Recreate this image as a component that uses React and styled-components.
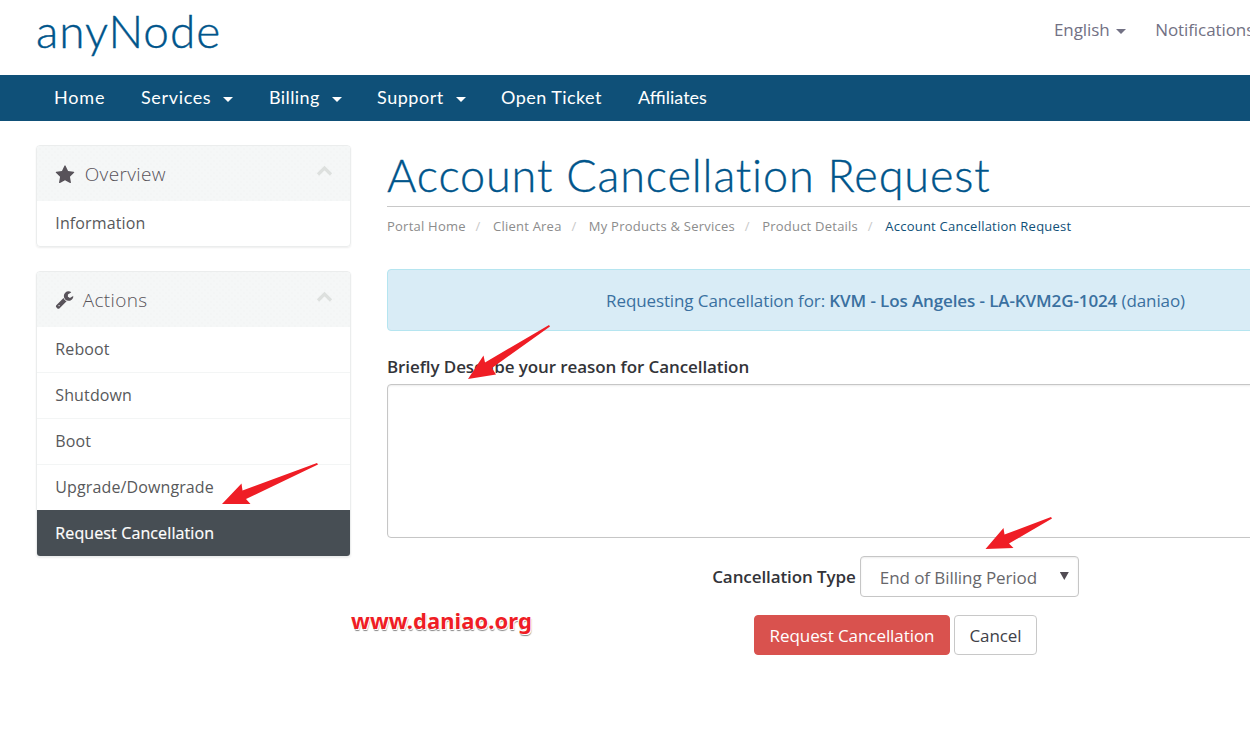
import React from "react";
import styled, { createGlobalStyle, css } from "styled-components";

const GlobalStyle = createGlobalStyle`
  * { box-sizing: border-box; }
  html, body { margin: 0; height: 100%; overflow: hidden; background: #fff; }
  body { font-family: "Open Sans", "Liberation Sans", sans-serif; font-size: 16px; color: #58595b; }
  ul, ol { list-style: none; margin: 0; padding: 0; }
  a { color: inherit; text-decoration: none; }
`;

const Page = styled.div`
  position: relative;
  width: 100%;
  height: 733px;
  overflow: hidden;
`;

const Header = styled.header`
  display: flex;
  justify-content: space-between;
  height: 75px;
  padding-left: 36px;
`;

const Logo = styled.a`
  font: 300 46px/62px Lato, sans-serif;
  letter-spacing: 0.95px;
  color: #00558b;
  -webkit-text-stroke: 0.4px #00558b;
`;

const TopLinks = styled.div`
  display: flex;
  width: 196px;
  gap: 29px;
  font-size: 17px;
  line-height: 60px;
  letter-spacing: -0.08px;
  white-space: nowrap;
  color: #727184;
`;

const Caret = styled.i`
  display: inline-block;
  vertical-align: middle;
  margin-left: ${(p) => p.$gap || 6.5}px;
  border: solid transparent;
  border-width: 5px 5px 0;
  border-top-color: currentColor;
`;

const NavBar = styled.nav`
  display: flex;
  height: 46px;
  padding-left: 54px;
  background: #0f5078;
  color: #fff;
  font: 400 18px/45px Lato, sans-serif;
`;

const NavItem = styled.a`
  width: ${(p) => p.$w}px;
  letter-spacing: ${(p) => p.$ls || 0}px;
  white-space: nowrap;
`;

const Content = styled.div`
  display: flex;
  gap: 36px;
  padding: 24px 0 0 36px;
`;

const Sidebar = styled.aside`
  display: flex;
  flex: none;
  flex-direction: column;
  gap: 24px;
  width: 315px;
`;

const Panel = styled.section`
  border: 1px solid #ebeded;
  border-radius: 4px;
  box-shadow: 0 1px 2px rgba(0, 0, 0, 0.07);
  overflow: hidden;
`;

const PanelHeading = styled.h3`
  display: flex;
  align-items: center;
  height: 55px;
  margin: 0;
  padding: 0 17px 0 18px;
  background-color: #f5f7f7;
  background-image: radial-gradient(#f0f2f2 0.5px, transparent 0.8px), radial-gradient(#f0f2f2 0.5px, transparent 0.8px);
  background-size: 6px 6px;
  background-position: 0 0, 3px 3px;
  font-size: 19px;
  font-weight: 300;
  color: #58535a;
`;

const HeadingText = styled.span`
  flex: 1;
  margin-left: ${(p) => p.$gap}px;
  letter-spacing: 0.35px;
`;

const PanelItem = styled.li`
  height: ${(p) => (p.$last ? 45 : 46)}px;
  padding-left: 18.300px;
  border-bottom: ${(p) => (p.$last ? 0 : 1)}px solid #f3f5f5;
  font-size: 16px;
  line-height: 44px;
  letter-spacing: 0.12px;
  color: #58595b;
  ${(p) => p.$active && css`
    height: 46px;
    line-height: 46px;
    color: #fff;
    background: #474e54;
    border: 0;
    -webkit-text-stroke: 0.2px #fff;
  `}
`;

const Main = styled.main`
  flex: none;
  width: 1017px;
`;

const Title = styled.h1`
  height: 62px;
  margin: 0;
  border-bottom: 1px solid #c8c8c8;
  font: 300 45px/60px Lato, sans-serif;
  letter-spacing: 0.86px;
  color: #00558b;
  -webkit-text-stroke: 0.35px #00558b;
`;

const Breadcrumb = styled.ol`
  display: flex;
  height: 38px;
  font-size: 13px;
  line-height: 38px;
  letter-spacing: 0.23px;
  color: #8c8c8c;
`;

const Crumb = styled.li`
  color: ${(p) => (p.$current ? "#0f5078" : "inherit")};
`;

const Slash = styled.li`
  padding: 0 12.450px 0 9.800px;
  color: #c9c9c9;
`;

const Alert = styled.div`
  height: 62px;
  margin-top: 24px;
  border: 1px solid #b5e5f0;
  border-radius: 4px;
  background: #d9ecf6;
  color: #3a70a0;
  font-size: 17px;
  line-height: 62px;
  letter-spacing: -0.11px;
  text-align: center;
  strong { font-weight: 600; }
`;

const Label = styled.label`
  font-size: 17px;
  font-weight: 600;
  line-height: 24px;
  letter-spacing: -0.09px;
  color: #333439;
`;

const ReasonField = styled.div`
  display: flex;
  flex-direction: column;
  margin-top: 24px;
`;

const Textarea = styled.textarea`
  height: 154px;
  margin-top: 5px;
  border: 1px solid #c6c6c6;
  border-radius: 4px;
  background: #fff;
  box-shadow: inset 0 1px 2px rgba(0, 0, 0, 0.08);
  resize: none;
`;

const FormRow = styled.div`
  display: flex;
  justify-content: center;
  align-items: center;
  gap: 4px;
  margin-top: 18px;
`;

const Select = styled.div`
  display: flex;
  justify-content: space-between;
  width: 219px;
  height: 41px;
  padding: 0 9px 0 19px;
  border: 1px solid #c6c6c6;
  border-radius: 4px;
  box-shadow: inset 0 1px 2px rgba(0, 0, 0, 0.08);
  font-size: 17px;
  line-height: 42px;
  letter-spacing: -0.08px;
  color: #67676b;
`;

const SelectArrow = styled.i`
  margin-top: 15px;
  width: 9px;
  height: 8px;
  background: #514c53;
  clip-path: polygon(0 0, 100% 0, 50% 100%);
`;

const Button = styled.button`
  width: ${(p) => p.$w}px;
  height: 40px;
  padding: 2px 0 0;
  border: 1px solid ${(p) => (p.$danger ? "#d9524e" : "#c8c8c8")};
  border-radius: 4px;
  background: ${(p) => (p.$danger ? "#d9524e" : "#fff")};
  color: ${(p) => (p.$danger ? "#fff" : "#404148")};
  font: 400 17px/36px "Open Sans", sans-serif;
  letter-spacing: -0.07px;
`;

const Annotations = styled.svg`
  position: absolute;
  left: 0;
  top: 0;
  pointer-events: none;
`;

const Watermark = styled.div`
  position: absolute;
  left: 351px;
  top: 605px;
  font: 700 22px/30px "Noto Sans", sans-serif;
  letter-spacing: 0.05px;
  color: #ef1d25;
  text-shadow: -1px -1px #fff, 1px -1px #fff, 1px 1px #fff, 1px 2px 1px #888;
`;

const Icon = styled.svg`
  flex: none;
  fill: currentColor;
  margin-top: ${(p) => p.$drop || 0}px;
`;

const Chevron = styled.svg`
  margin-bottom: 6px;
  fill: none;
  stroke: #dde0de;
  stroke-width: 3.2px;
`;

const StarIcon = () => (
  <Icon $drop={3} width="20" height="20" viewBox="0 0 1792 1792">
    <path d="M1728 647q0 22-26 48l-363 354 86 500q1 7 1 20 0 21-10.500 35.500t-30.500 14.500q-19 0-40-12l-449-236-449 236q-22 12-40 12-21 0-31.500-14.500t-10.500-35.500q0-6 2-20l86-500-364-354q-25-27-25-48 0-37 56-46l502-73 225-455q19-41 49-41t49 41l225 455 502 73q56 9 56 46z" />
  </Icon>
);

const WrenchIcon = () => (
  <Icon width="19" height="19" viewBox="0 0 1792 1792">
    <path d="M448 1472q0-26-19-45t-45-19-45 19-19 45 19 45 45 19 45-19 19-45zm644-420l-682 682q-37 37-90 37-52 0-91-37l-106-108q-38-36-38-90 0-53 38-91l681-681q39 98 114.500 173.500t173.500 114.500zm634-435q0 39-23 106-47 134-164.500 217.500t-258.500 83.500q-185 0-316.500-131.500t-131.500-316.500 131.500-316.500 316.500-131.500q58 0 121.500 16.500t107.500 46.500q16 11 16 28t-16 28l-293 169v224l193 107q5-3 79-48.500t135.500-81 70.500-35.500q15 0 23.500 10t8.500 25z" />
  </Icon>
);

const ChevronUp = () => (
  <Chevron width="17" height="20" viewBox="0 0 17 20">
    <path d="M2 13.500 8.500 7 15 13.500" />
  </Chevron>
);

const navItems = [
  { label: "Home", w: 87, ls: 0.8 },
  { label: "Services", w: 128, ls: 0.65, menu: true },
  { label: "Billing", w: 108, ls: 0.4, menu: true },
  { label: "Support", w: 124, ls: 0.55, menu: true },
  { label: "Open Ticket", w: 137, ls: 0.45 },
  { label: "Affiliates", w: 90 },
];

const crumbs = ["Portal Home", "Client Area", "My Products & Services", "Product Details"];
const actions = ["Reboot", "Shutdown", "Boot", "Upgrade/Downgrade"];

export default function App() {
  return (
    <Page>
      <GlobalStyle />
      <Header>
        <Logo>anyNode</Logo>
        <TopLinks>
          <span>English<Caret /></span>
          <span>Notifications</span>
        </TopLinks>
      </Header>
      <NavBar>
        {navItems.map((n) => (
          <NavItem key={n.label} $w={n.w} $ls={n.ls}>
            {n.label}
            {n.menu && <Caret $gap={12} />}
          </NavItem>
        ))}
      </NavBar>
      <Content>
        <Sidebar>
          <Panel>
            <PanelHeading>
              <StarIcon />
              <HeadingText $gap={9.7}>Overview</HeadingText>
              <ChevronUp />
            </PanelHeading>
            <ul><PanelItem $last>Information</PanelItem></ul>
          </Panel>
          <Panel>
            <PanelHeading>
              <WrenchIcon />
              <HeadingText $gap={8.7}>Actions</HeadingText>
              <ChevronUp />
            </PanelHeading>
            <ul>
              {actions.map((a, i) => (
                <PanelItem key={a} $last={i === actions.length - 1}>{a}</PanelItem>
              ))}
              <PanelItem $active>Request Cancellation</PanelItem>
            </ul>
          </Panel>
        </Sidebar>
        <Main>
          <Title>Account Cancellation Request</Title>
          <Breadcrumb>
            {crumbs.map((c) => (
              <React.Fragment key={c}>
                <Crumb>{c}</Crumb>
                <Slash>/</Slash>
              </React.Fragment>
            ))}
            <Crumb $current>Account Cancellation Request</Crumb>
          </Breadcrumb>
          <Alert>
            Requesting Cancellation for: <strong>KVM - Los Angeles - LA-KVM2G-1024</strong> (daniao)
          </Alert>
          <ReasonField>
            <Label htmlFor="reason">Briefly Describe your reason for Cancellation</Label>
            <Textarea id="reason" />
          </ReasonField>
          <FormRow>
            <Label>Cancellation Type</Label>
            <Select>End of Billing Period<SelectArrow /></Select>
          </FormRow>
          <FormRow>
            <Button $danger $w={196}>Request Cancellation</Button>
            <Button $w={83}>Cancel</Button>
          </FormRow>
        </Main>
      </Content>
      <Watermark>www.daniao.org</Watermark>
      <Annotations width="1250" height="733" fill="#ef1d25">
        <path d="M468 379 483.500 355.500 485 362.500 549 325 550 326.500 492 368 496 374.500Z" />
        <path d="M222 504 241.500 483.500 242.500 490.500 317 463 318 464.500 246 499 250.500 504Z" />
        <path d="M985.500 549 1003.500 528 1004.500 534.500 1051 517 1052 518.500 1009 543.500 1013.500 548Z" />
      </Annotations>
    </Page>
  );
}
